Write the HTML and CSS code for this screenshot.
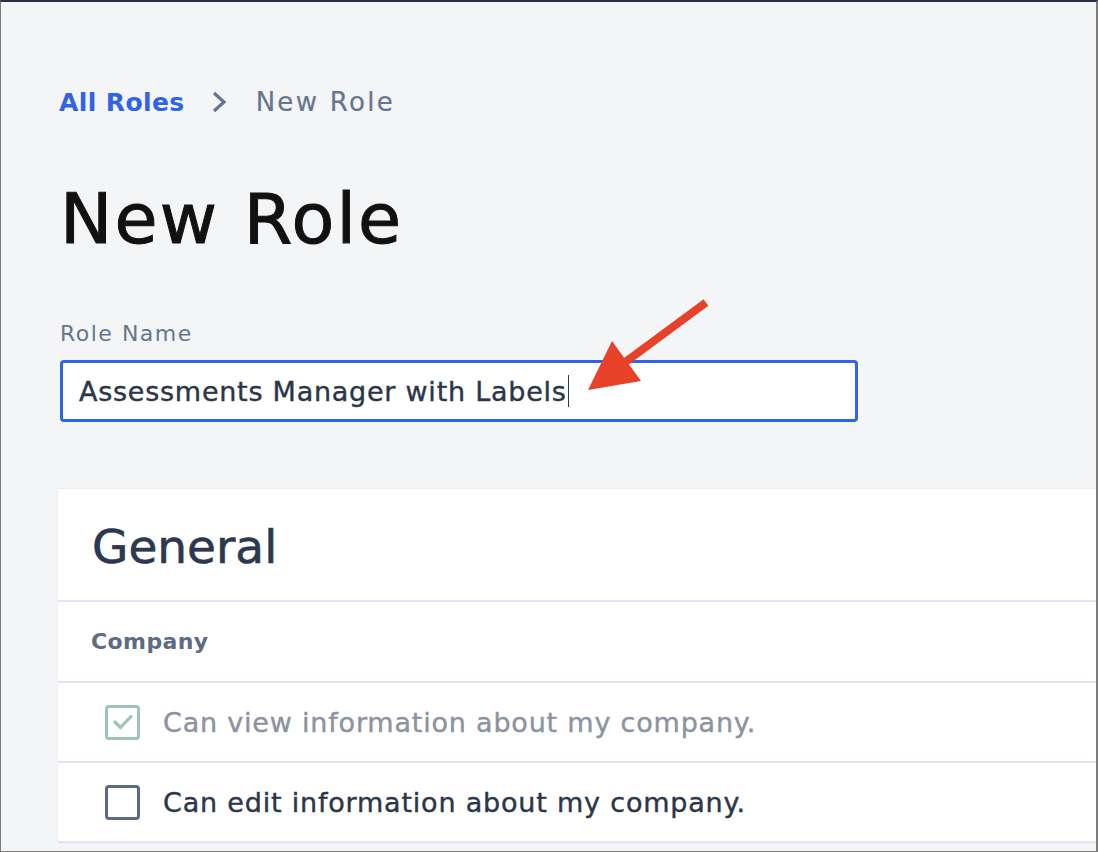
FILE: index.html
```html
<!DOCTYPE html>
<html lang="en">
<head>
<meta charset="utf-8">
<title>New Role</title>
<link rel="stylesheet" href="styles.css">
</head>
<body>
<div class="frame">
  <main class="page">
    <nav class="crumbs">
      <a class="crumb-link" href="#">All Roles</a>
      <svg class="crumb-sep" width="16" height="24" viewBox="0 0 16 24"><path d="M2 3 L12 12 L2 21" fill="none" stroke="#66758f" stroke-width="3.2"/></svg>
      <span class="crumb-current">New Role</span>
    </nav>
    <h1 class="title">New Role</h1>
    <label class="field-label" for="rn">Role Name</label>
    <div class="input-wrap">
      <div class="input" id="rn"><span class="input-text">Assessments Manager with Labels</span><span class="caret"></span></div>
      <svg class="arrow" width="140" height="110" viewBox="0 0 140 110"><line x1="126" y1="12.5" x2="44" y2="73" stroke="#e8412a" stroke-width="8"/><polygon points="8,100 32,51 61,91" fill="#e8412a"/></svg>
    </div>
    <section class="card">
      <h2 class="card-title">General</h2>
      <div class="group-head">Company</div>
      <div class="perm-row disabled">
        <span class="box checked"><svg width="22" height="18" viewBox="0 0 22 18"><path d="M3 9 L8.5 14.5 L19 3.5" fill="none" stroke="#9ec4b3" stroke-width="3.2" stroke-linecap="round" stroke-linejoin="round"/></svg></span>
        <span class="perm-text">Can view information about my company.</span>
      </div>
      <div class="perm-row">
        <span class="box"></span>
        <span class="perm-text">Can edit information about my company.</span>
      </div>
    </section>
  </main>
</div>
</body>
</html>
```

FILE: styles.css
```css
html, body {
  margin: 0;
  padding: 0;
}
body {
  background: #f4f5f7;
  font-family: "DejaVu Sans", "Liberation Sans", sans-serif;
}
.frame {
  width: 1098px;
  height: 852px;
  box-sizing: border-box;
  border-top: 2px solid #2b3247;
  border-left: 1px solid #7b7b7b;
  border-right: 2px solid #7b7b7b;
  border-bottom: 1px solid #7b7b7b;
  overflow: hidden;
  background: #f4f5f7;
}
.page {
  padding: 0 0 0 57px;
}
.crumbs {
  display: flex;
  align-items: center;
  height: 40px;
  margin-top: 80px;
  font-size: 25px;
}
.crumb-link {
  color: #2f63e8;
  font-weight: 700;
  text-decoration: none;
  padding-left: 1px;
  letter-spacing: 0.4px;
}
.crumb-sep {
  margin: 0 28px 0 27px;
}
.crumb-current {
  color: #66758f;
  font-size: 26px;
  letter-spacing: 2.3px;
  -webkit-text-stroke: 0.2px #66758f;
}
.title {
  margin: 54px 0 0 2px;
  font-size: 70px;
  font-weight: 400;
  color: #111111;
  line-height: 86px;
  letter-spacing: 2.2px;
  -webkit-text-stroke: 1px #111111;
}
.field-label {
  display: block;
  margin: 57px 0 0 2px;
  font-size: 22px;
  color: #66758f;
  line-height: 30px;
  letter-spacing: 1.5px;
}
.input-wrap {
  position: relative;
  margin: 11px 0 0 2px;
  width: 798px;
}
.input {
  height: 62px;
  box-sizing: border-box;
  border: 3px solid #2f63e8;
  border-radius: 4px;
  background: #ffffff;
  display: flex;
  align-items: center;
  padding-left: 16px;
  font-size: 27px;
  color: #2b3648;
  letter-spacing: 0.75px;
  -webkit-text-stroke: 0.4px #2b3648;
}
.caret {
  display: inline-block;
  width: 1.5px;
  height: 32px;
  background: #2b3648;
  margin-left: 1px;
}
.arrow {
  position: absolute;
  left: 520px;
  top: -70px;
}
.card {
  margin-top: 67px;
  background: #ffffff;
  box-shadow: 0 0 2px rgba(0,0,0,0.08);
  width: 1100px;
}
.card-title {
  margin: 0;
  height: 113px;
  box-sizing: border-box;
  padding: 26px 0 0 34px;
  font-size: 47px;
  font-weight: 400;
  color: #2b3850;
  line-height: 64px;
  border-bottom: 2px solid #e2e5f5;
  -webkit-text-stroke: 0.6px #2b3850;
}
.group-head {
  height: 81px;
  box-sizing: border-box;
  display: flex;
  align-items: center;
  padding-left: 33px;
  font-size: 22px;
  font-weight: 700;
  color: #5f6b82;
  letter-spacing: 0.4px;
  border-bottom: 2px solid #e2e5f5;
}
.perm-row {
  height: 80px;
  box-sizing: border-box;
  display: flex;
  align-items: center;
  padding-left: 47px;
  border-bottom: 2px solid #e2e5f5;
  font-size: 27px;
  color: #2b3648;
  letter-spacing: 0.8px;
  -webkit-text-stroke: 0.4px currentColor;
}
.perm-row.disabled {
  color: #8c939f;
}
.box {
  width: 35px;
  height: 35px;
  box-sizing: border-box;
  border: 3.5px solid #5c6a85;
  border-radius: 4px;
  margin-right: 23px;
  display: flex;
  align-items: center;
  justify-content: center;
  flex: none;
}
.box.checked {
  border-color: #9ec4b3;
}
```
